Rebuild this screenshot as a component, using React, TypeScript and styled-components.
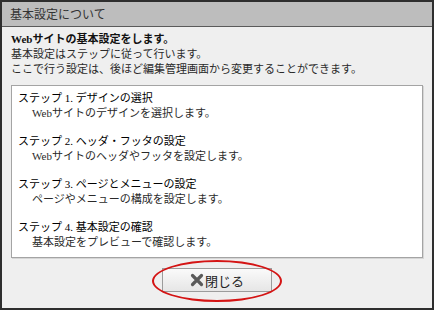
import React from 'react';
import styled, { createGlobalStyle } from 'styled-components';

const GlobalStyle = createGlobalStyle`
  html, body {
    margin: 0;
    padding: 0;
    background: #ffffff;
  }
  body {
    font-family: "Liberation Serif", "Noto Sans CJK JP", serif;
  }
`;

const Frame = styled.div`
  width: 434px;
  height: 310px;
  box-sizing: border-box;
  border: 2px solid #2e2e2e;
  background: #efefef;
  display: flex;
  flex-direction: column;
`;

const TitleBar = styled.div`
  height: 25px;
  flex: none;
  box-sizing: border-box;
  background: #bdbdbd;
  border-bottom: 1px solid #5a5a5a;
  padding-left: 8px;
  font-size: 12px;
  line-height: 24px;
  color: #333;
  font-family: "Noto Sans CJK JP", sans-serif;
`;

const Body = styled.div`
  padding: 5px 9px 0 9px;
  display: flex;
  flex-direction: column;
`;

const Intro = styled.div`
  font-size: 11px;
  line-height: 15px;
  color: #2a2a2a;
`;

const Lead = styled.div`
  font-weight: bold;
  color: #111;
`;

const Panel = styled.div`
  margin-top: 8px;
  height: 173px;
  box-sizing: border-box;
  background: #fff;
  border: 1px solid #a4a4a4;
  box-shadow: 1px 1px 0 #d6d6d6;
  padding: 5px 8px 0 6px;
`;

const Step = styled.div`
  margin-bottom: 13px;
  font-size: 11px;
  line-height: 15px;
`;

const StepTitle = styled.div`
  color: #000;
`;

const StepDesc = styled.div`
  padding-left: 14px;
  color: #2a2a2a;
`;

const Footer = styled.div`
  display: flex;
  justify-content: center;
  padding-top: 10px;
`;

const ButtonWrap = styled.div`
  position: relative;
`;

const CloseButton = styled.button`
  width: 110px;
  height: 24px;
  box-sizing: border-box;
  border: 1px solid #9c9c9c;
  background: linear-gradient(#fafafa, #e6e6e6);
  display: flex;
  align-items: center;
  justify-content: center;
  gap: 1px;
  padding: 0;
  font-family: "Noto Sans CJK JP", sans-serif;
  font-size: 13px;
  color: #222;
`;

const Circle = styled.span`
  position: absolute;
  left: -10px;
  right: -10px;
  top: -8px;
  bottom: -10px;
  border: 2px solid #d41414;
  border-radius: 50%;
  pointer-events: none;
`;

const steps = [
  { title: 'ステップ 1. デザインの選択', desc: 'Webサイトのデザインを選択します。' },
  { title: 'ステップ 2. ヘッダ・フッタの設定', desc: 'Webサイトのヘッダやフッタを設定します。' },
  { title: 'ステップ 3. ページとメニューの設定', desc: 'ページやメニューの構成を設定します。' },
  { title: 'ステップ 4. 基本設定の確認', desc: '基本設定をプレビューで確認します。' },
];

const App: React.FC = () => {
  return (
    <>
      <GlobalStyle />
      <Frame>
        <TitleBar>基本設定について</TitleBar>
        <Body>
          <Intro>
            <Lead>Webサイトの基本設定をします。</Lead>
            <div>基本設定はステップに従って行います。</div>
            <div>ここで行う設定は、後ほど編集管理画面から変更することができます。</div>
          </Intro>
          <Panel>
            {steps.map((step, index) => (
              <Step key={index}>
                <StepTitle>{step.title}</StepTitle>
                <StepDesc>{step.desc}</StepDesc>
              </Step>
            ))}
          </Panel>
          <Footer>
            <ButtonWrap>
              <CloseButton>
                <svg width="14" height="14" viewBox="0 0 14 14">
                  <path d="M2.5 2.5 L11.5 11.5 M11.5 2.5 L2.5 11.5" stroke="#5a5a5a" strokeWidth="3.2" strokeLinecap="round" />
                </svg>
                閉じる
              </CloseButton>
              <Circle />
            </ButtonWrap>
          </Footer>
        </Body>
      </Frame>
    </>
  );
};

export default App;
